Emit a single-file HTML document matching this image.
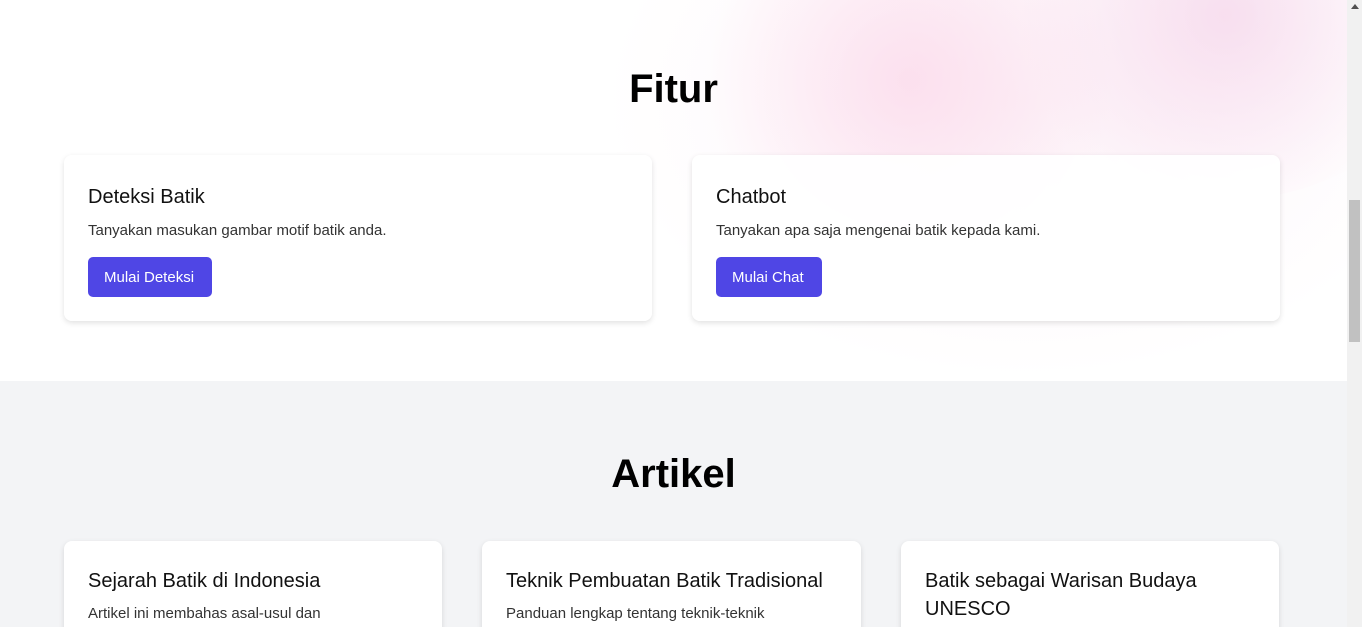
<!DOCTYPE html>
<html><head><meta charset="utf-8"><style>
*{box-sizing:border-box;margin:0;padding:0}
html,body{width:1362px;height:627px;overflow:hidden;background:#fff;font-family:"Liberation Sans",sans-serif;color:#111}
.page{position:absolute;left:0;top:0;width:1347px;height:627px;overflow:hidden}
.top{position:absolute;left:0;top:0;width:1347px;height:381px;background:#fff;overflow:hidden}
.blob1{position:absolute;left:700px;top:-120px;width:420px;height:400px;border-radius:50%;background:radial-gradient(circle,rgba(250,205,228,.55),rgba(250,215,232,0) 70%)}
.blob2{position:absolute;left:1000px;top:-170px;width:450px;height:370px;border-radius:50%;background:radial-gradient(circle,rgba(242,200,228,.55),rgba(242,205,230,0) 70%)}
.blob3{position:absolute;left:600px;top:-180px;width:850px;height:560px;border-radius:50%;background:radial-gradient(ellipse,rgba(250,228,240,.45),rgba(255,255,255,0) 70%)}
h2{position:absolute;left:0;width:1347px;text-align:center;font-size:40px;font-weight:bold;color:#000}
.card{position:absolute;background:#fff;border-radius:8px;box-shadow:0 2px 6px rgba(0,0,0,.12)}
.card h3{position:absolute;left:24px;font-size:20px;font-weight:normal;color:#111}
.card p{position:absolute;left:24px;font-size:15px;color:#333}
.btn{position:absolute;left:24px;top:102px;height:40px;background:#4f46e5;color:#fff;border-radius:5px;font-size:15px;line-height:41px;padding:0 18px 0 16px}
.bottom{position:absolute;left:0;top:381px;width:1347px;height:246px;background:#f3f4f6}
.sb{position:absolute;left:1347px;top:0;width:15px;height:627px;background:#f1f1f1}
.thumb{position:absolute;left:2px;top:200px;width:11px;height:142px;background:#c1c1c1}
.arr{position:absolute;left:4px;top:4px;width:0;height:0;border-left:4px solid transparent;border-right:4px solid transparent;border-bottom:5px solid #505050}
</style></head><body>
<div class="page">
<div class="top">
<div class="blob3"></div><div class="blob1"></div><div class="blob2"></div>
<h2 style="top:67px">Fitur</h2>
<div class="card" style="left:64px;top:155px;width:588px;height:166px;background:rgba(255,255,255,.95)">
<h3 style="top:31px">Deteksi Batik</h3>
<p style="top:67px">Tanyakan masukan gambar motif batik anda.</p>
<div class="btn">Mulai Deteksi</div>
</div>
<div class="card" style="left:692px;top:155px;width:588px;height:166px;background:rgba(255,255,255,.92)">
<h3 style="top:31px">Chatbot</h3>
<p style="top:67px">Tanyakan apa saja mengenai batik kepada kami.</p>
<div class="btn">Mulai Chat</div>
</div>
</div>
<div class="bottom">
<h2 style="top:71px">Artikel</h2>
<div class="card" style="left:64px;top:160px;width:378px;height:120px">
<h3 style="top:29px">Sejarah Batik di Indonesia</h3>
<p style="top:64px">Artikel ini membahas asal-usul dan</p>
</div>
<div class="card" style="left:482px;top:160px;width:379px;height:120px">
<h3 style="top:29px">Teknik Pembuatan Batik Tradisional</h3>
<p style="top:64px">Panduan lengkap tentang teknik-teknik</p>
</div>
<div class="card" style="left:901px;top:160px;width:378px;height:120px">
<h3 style="top:26px;line-height:28px;width:320px">Batik sebagai Warisan Budaya UNESCO</h3>
</div>
</div>
</div>
<div class="sb"><div class="arr"></div><div class="thumb"></div></div>
</body></html>
